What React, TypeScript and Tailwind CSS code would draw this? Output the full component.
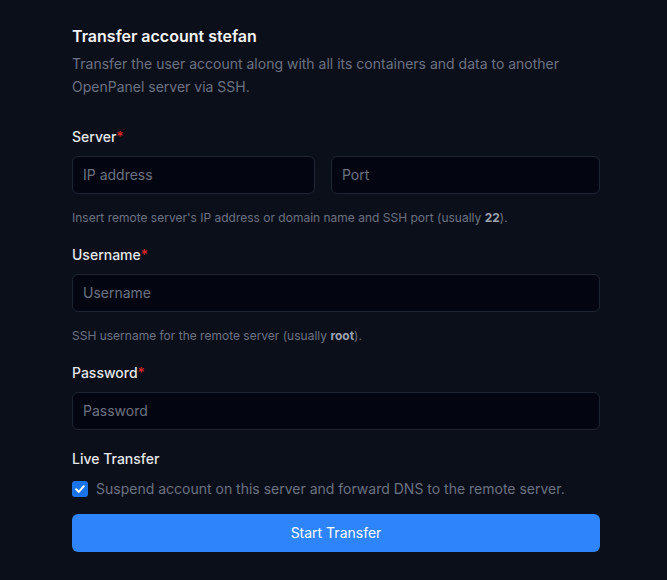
import React from "react";

function Label({ children, required }: { children: React.ReactNode; required?: boolean }) {
  return (
    <div className="text-[14px] leading-[20px] font-medium text-[#e5e7eb]">
      {children}
      {required && <span className="text-[#dc2626]">*</span>}
    </div>
  );
}

function Input({ placeholder, className = "" }: { placeholder: string; className?: string }) {
  return (
    <input
      placeholder={placeholder}
      className={`h-[38px] rounded-[6px] border border-[#1e2533] bg-[#030610] px-[10px] pb-[2px] text-[14px] text-[#e5e7eb] placeholder:text-[#6b7280] outline-none ${className}`}
    />
  );
}

export default function App() {
  return (
    <div
      className="min-h-[580px] w-full bg-[#0b0f1a] px-[72px] pt-[24px]"
      style={{ fontFamily: "Inter, 'Noto Sans', sans-serif" }}
    >
      <div className="w-[528px]">
        <h2 className="text-[16px] leading-[24px] font-semibold text-[#f3f4f6]">Transfer account stefan</h2>
        <p className="mt-[4px] text-[14px] leading-[23px] text-[#6b7280]">
          Transfer the user account along with all its containers and data to another OpenPanel server via SSH.
        </p>

        <div className="mt-[29px]">
          <Label required>Server</Label>
          <div className="mt-[9px] flex gap-[16px]">
            <Input placeholder="IP address" className="w-[243px]" />
            <Input placeholder="Port" className="flex-1 min-w-0" />
          </div>
          <p className="mt-[16px] text-[12px] leading-[16px] text-[#6b7280]">
            Insert remote server's IP address or domain name and SSH port (usually{" "}
            <span className="font-bold text-[#9ca3af]">22</span>).
          </p>
        </div>

        <div className="mt-[19px]">
          <Label required>Username</Label>
          <Input placeholder="Username" className="mt-[9px] w-full" />
          <p className="mt-[16px] text-[12px] leading-[16px] text-[#6b7280]">
            SSH username for the remote server (usually <span className="font-bold text-[#9ca3af]">root</span>).
          </p>
        </div>

        <div className="mt-[19px]">
          <Label required>Password</Label>
          <Input placeholder="Password" className="mt-[9px] w-full" />
        </div>

        <div className="mt-[19px]">
          <Label>Live Transfer</Label>
          <div className="mt-[10px] flex items-center gap-[8px]">
            <span className="flex h-[16px] w-[16px] items-center justify-center rounded-[3px] bg-[#1a73e8]">
              <svg width="12" height="12" viewBox="0 0 12 12" fill="none">
                <path d="M2.2 6.3 L4.8 8.9 L9.8 3.2" stroke="white" strokeWidth="2" strokeLinecap="round" strokeLinejoin="round" />
              </svg>
            </span>
            <span className="text-[14px] leading-[20px] text-[#6b7280]">
              Suspend account on this server and forward DNS to the remote server.
            </span>
          </div>
        </div>

        <button className="mt-[15px] h-[38px] w-full rounded-[6px] bg-[#2e84fa] pb-[2px] text-[14px] font-normal text-white">
          Start Transfer
        </button>
      </div>
    </div>
  );
}
